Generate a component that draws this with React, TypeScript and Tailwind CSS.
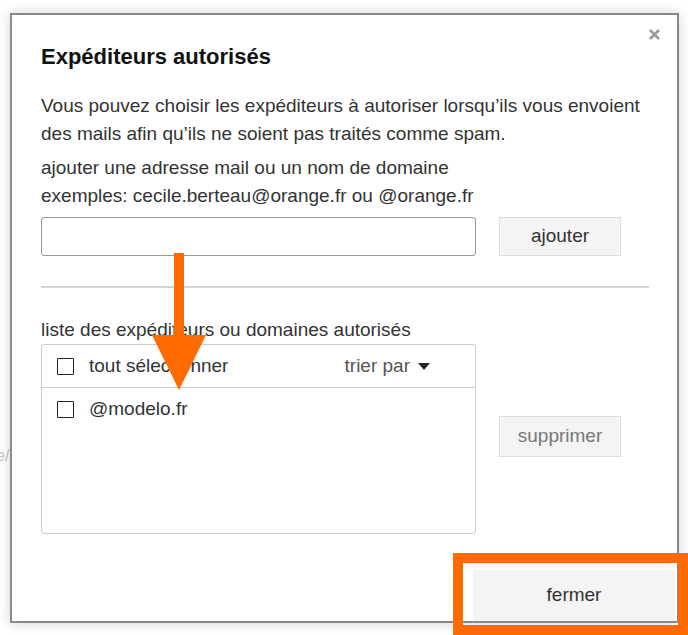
import React from "react";

function Checkbox() {
  return <span className="inline-block w-[17px] h-[17px] border-[1.5px] border-[#222] rounded-[1px] bg-white shrink-0" />;
}

export default function App() {
  return (
    <div
      className="relative w-[688px] h-[635px] overflow-hidden bg-white pt-[13px] pl-[10px] text-[#333]"
      style={{ fontFamily: '"Liberation Sans", Arial, sans-serif' }}
    >
      {/* page behind the dialog */}
      <span className="absolute left-[-4px] top-[444px] text-[16px] text-[#c4c4c4]">e/</span>

      {/* dialog */}
      <div className="relative flex flex-col w-[669px] h-[610px] border-2 border-[#8a8a8a] bg-white shadow-[0_0_12px_rgba(0,0,0,0.18)]">
        <button className="absolute right-[16px] top-[13px] text-[#999]">
          <svg width="13" height="13" viewBox="0 0 13 13">
            <path d="M2 2L11 11M11 2L2 11" stroke="#999" strokeWidth="2.6" />
          </svg>
        </button>

        <div className="pl-[29px] pr-[28px] pt-[29px]">
          <h2 className="text-[22px] leading-[26px] font-bold text-[#111]">Expéditeurs autorisés</h2>

          <p className="mt-[22px] text-[19px] leading-[28px]">
            Vous pouvez choisir les expéditeurs à autoriser lorsqu’ils vous envoient des mails afin qu’ils ne soient pas
            traités comme spam.
          </p>

          <div className="mt-[6px] text-[19px] leading-[28px]">
            <div>ajouter une adresse mail ou un nom de domaine</div>
            <div>exemples: cecile.berteau@orange.fr ou @orange.fr</div>
          </div>

          <div className="mt-[7px] flex items-center gap-[23px]">
            <input className="w-[435px] h-[39px] border border-[#999] rounded-[3px] px-2 text-[19px] outline-none" />
            <button className="w-[122px] h-[39px] bg-[#f4f4f4] border border-[#ddd] text-[19px] text-[#333]">
              ajouter
            </button>
          </div>

          <div className="mt-[30px] h-[2px] bg-[#d4d4d4]" />

          <div className="mt-[28px] text-[19px] leading-[28px]">liste des expéditeurs ou domaines autorisés</div>

          <div className="flex items-center gap-[23px]">
            <div className="w-[435px] h-[190px] border border-[#ccc] rounded-[3px]">
              <div className="h-[43px] flex items-center pl-[15px] pr-[45px] border-b border-[#ccc] text-[19px]">
                <Checkbox />
                <span className="ml-[15px]">tout sélectionner</span>
                <span className="ml-auto flex items-center gap-[8px] text-[#555]">
                  trier par
                  <svg width="12" height="7" viewBox="0 0 12 7">
                    <path d="M0 0H12L6 7Z" fill="#222" />
                  </svg>
                </span>
              </div>
              <div className="h-[43px] flex items-center pl-[15px] text-[19px]">
                <Checkbox />
                <span className="ml-[15px]">@modelo.fr</span>
              </div>
            </div>
            <button className="mb-[5px] w-[122px] h-[41px] bg-[#f4f4f4] border border-[#ddd] text-[19px] text-[#777]">
              supprimer
            </button>
          </div>
        </div>

        <div className="mt-auto flex justify-end pr-[2px]">
          <button className="w-[202px] h-[51px] bg-[#f4f4f4] text-[19px] text-[#333]">fermer</button>
        </div>
      </div>

      {/* orange annotations */}
      <svg className="absolute left-[150px] top-[253px]" width="60" height="140" viewBox="0 0 60 140">
        <rect x="24" y="0" width="10" height="84" fill="#ff6b00" />
        <path d="M2 82H56L29 137Z" fill="#ff6b00" />
      </svg>
      <div className="absolute left-[453px] top-[553px] w-[235px] h-[82px] border-[10px] border-[#ff6b00]" />
    </div>
  );
}
